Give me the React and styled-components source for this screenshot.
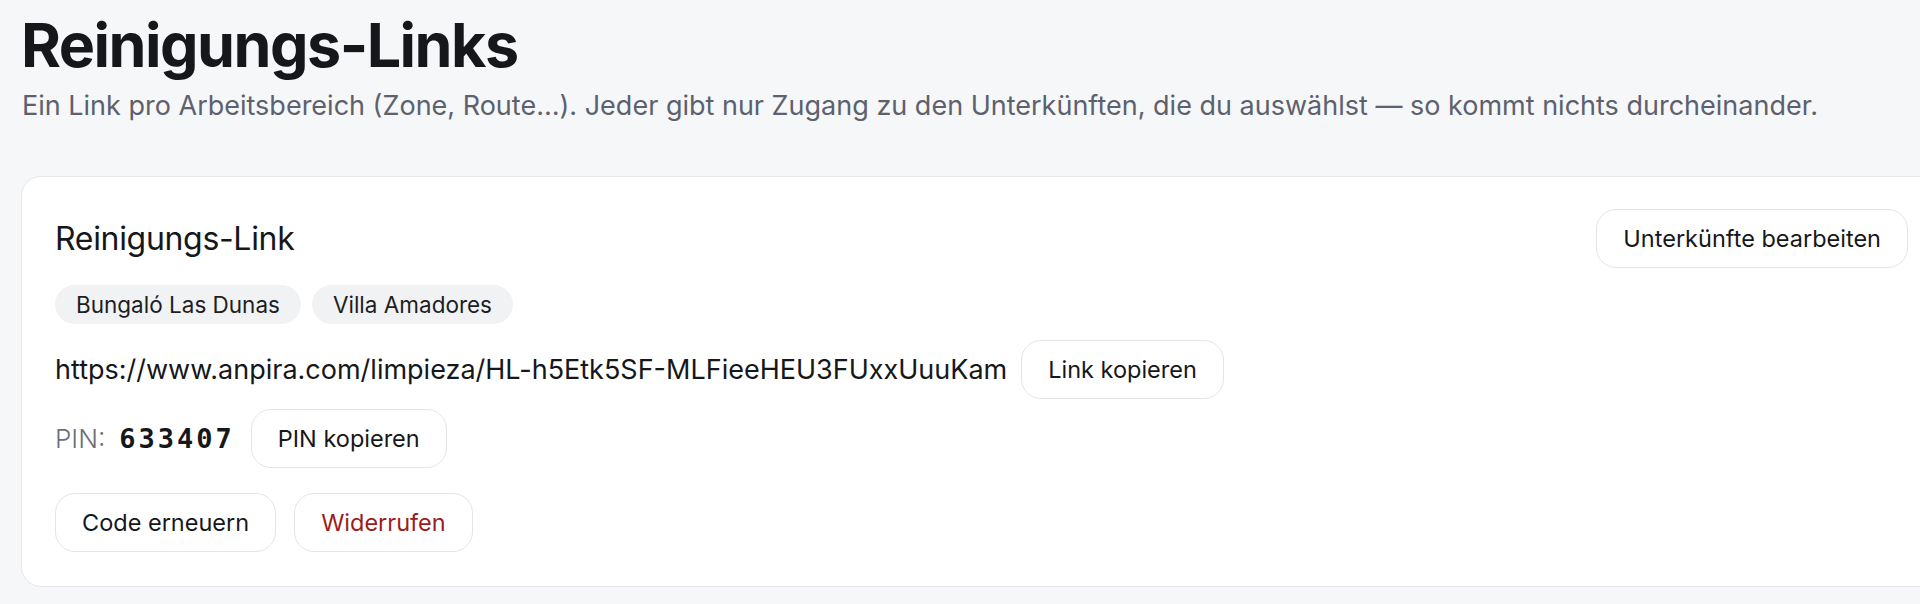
import React from 'react'
import styled, { createGlobalStyle } from 'styled-components'

const GlobalStyle = createGlobalStyle`
html, body {
  margin: 0;
  padding: 0;
  overflow: hidden;
  background: #f6f7f9;
}

body {
  font-family: Inter, "Noto Sans", sans-serif;
  color: #16171b;
}
`

const Page = styled.div`
padding: 9px 0 0 21px;
`

const Title = styled.h1`
margin: 0;
font-size: 61px;
font-weight: 700;
letter-spacing: -0.025em;
line-height: 1.2;
color: #16171b;
`

const Subtitle = styled.p`
margin: 5px 0 0 1px;
font-size: 27px;
line-height: 1.4;
color: #5d616d;
`

const Card = styled.section`
box-sizing: border-box;
width: 1921px;
margin-top: 51px;
padding: 32px 33px 34px;
background: #ffffff;
border: 1.5px solid #e5e6ea;
border-radius: 20px;
`

const HeaderRow = styled.div`
display: flex;
justify-content: space-between;
align-items: center;
`

const CardTitle = styled.h2`
margin: 0;
font-size: 32px;
font-weight: 400;
letter-spacing: -0.01em;
color: #16171b;
`

const Row = styled.div`
display: flex;
align-items: center;
gap: ${(p) => p.$gap || 14}px;
margin-top: ${(p) => p.$top || 0}px;
`

const Chip = styled.span`
display: inline-flex;
align-items: center;
height: 39px;
padding: 0 21px;
border-radius: 20px;
background: #f1f2f4;
font-size: 22.5px;
color: #1d1e22;
`

const Url = styled.span`
font-size: 27px;
color: #16171b;
`

const Pin = styled.span`
display: inline-flex;
align-items: baseline;
gap: 14px;
`

const PinLabel = styled.span`
font-size: 26px;
font-weight: 300;
color: #6b6e79;
`

const PinCode = styled.span`
font-family: "DejaVu Sans Mono", "Liberation Mono", monospace;
font-size: 27px;
font-weight: 700;
letter-spacing: 3px;
color: #16171b;
`

const Button = styled.button`
box-sizing: border-box;
height: 59px;
padding: 0 26px;
background: #ffffff;
border: 1.5px solid #e4e5e9;
border-radius: 20px;
font-family: Inter, "Noto Sans", sans-serif;
font-size: 23.5px;
font-weight: 400;
color: ${(p) => (p.$danger ? '#9b1c1c' : '#16171b')};
cursor: pointer;
`

export default function App() {
  return (
    <>
      <GlobalStyle />
      <Page>
        <Title>Reinigungs-Links</Title>
        <Subtitle>
          Ein Link pro Arbeitsbereich (Zone, Route…). Jeder gibt nur Zugang zu den Unterkünften, die du auswählst — so kommt nichts durcheinander.
        </Subtitle>
        <Card>
          <HeaderRow>
            <CardTitle>Reinigungs-Link</CardTitle>
            <Button>Unterkünfte bearbeiten</Button>
          </HeaderRow>
          <Row $top={17} $gap={11}>
            <Chip>Bungaló Las Dunas</Chip>
            <Chip>Villa Amadores</Chip>
          </Row>
          <Row $top={16} $gap={14}>
            <Url>https://www.anpira.com/limpieza/HL-h5Etk5SF-MLFieeHEU3FUxxUuuKam</Url>
            <Button>Link kopieren</Button>
          </Row>
          <Row $top={10} $gap={16}>
            <Pin>
              <PinLabel>PIN:</PinLabel>
              <PinCode>633407</PinCode>
            </Pin>
            <Button>PIN kopieren</Button>
          </Row>
          <Row $top={25} $gap={18}>
            <Button>Code erneuern</Button>
            <Button $danger>Widerrufen</Button>
          </Row>
        </Card>
      </Page>
    </>
  )
}
